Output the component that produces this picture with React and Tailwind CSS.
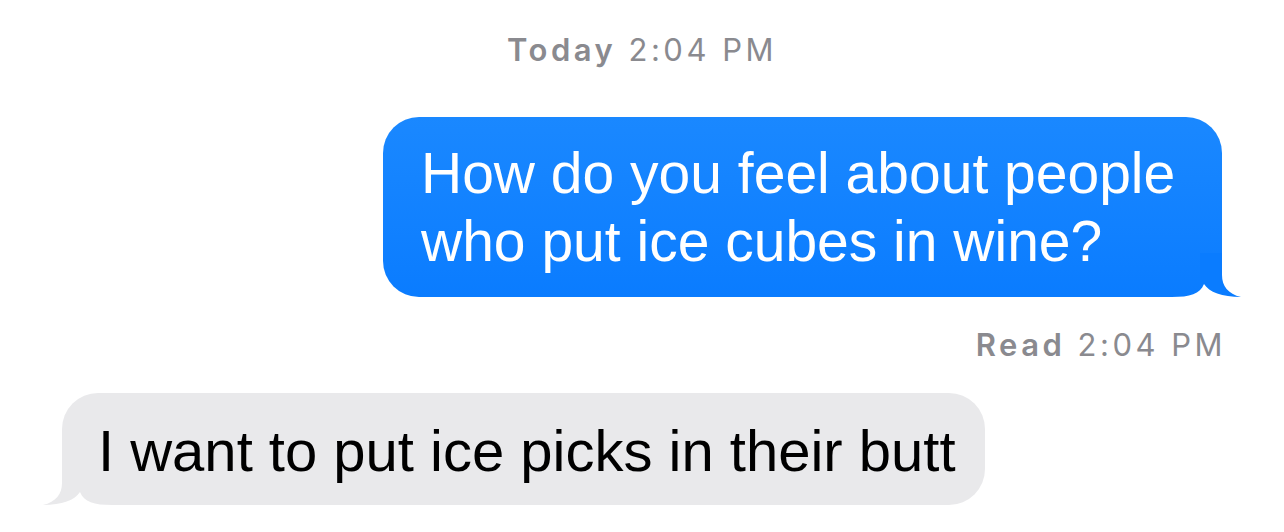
import React from "react";

const FONT = { fontFamily: '"Liberation Sans", Arial, sans-serif' };
const META = { fontFamily: 'Inter, "Liberation Sans", sans-serif' };

function Tail({ color, flip }) {
  // tail drawn from bubble's bottom-right corner; mirrored for incoming bubble
  return (
    <svg
      width="70"
      height="44"
      viewBox="0 0 70 44"
      className={
        "absolute bottom-0 " + (flip ? "left-[-20px] -scale-x-100" : "right-[-20px]")
      }
    >
      <path d="M50 0 L50 22 C50 33 56 41 69 44 L28 44 L28 0 Z" fill={color} />
      <path d="M0 44 C18 44 28 41 32 31 C37 39 50 44 69 44 Z" fill="#ffffff" />
    </svg>
  );
}

export default function App() {
  return (
    <div className="w-[1284px] h-[532px] bg-white flex flex-col overflow-hidden" style={FONT}>
      <div
        className="pt-[33px] text-center text-[31px] leading-[34px] tracking-[3.5px] text-[#8a8a8f]"
        style={META}
      >
        <span className="font-semibold">Today</span> 2:04 PM
      </div>

      <div className="flex justify-end pr-[62px] mt-[50px]">
        <div className="relative w-[839px] rounded-[36px] bg-gradient-to-b from-[#1a88ff] to-[#0a7cff] pl-[38px] py-[22px] text-white text-[57px] leading-[68px] whitespace-nowrap">
          How do you feel about people
          <br />
          who put ice cubes in wine?
          <Tail color="#0a7cff" />
        </div>
      </div>

      <div
        className="flex justify-end pr-[58px] mt-[31px] text-[31px] leading-[34px] tracking-[3.5px] text-[#8a8a8f]"
        style={META}
      >
        <span className="font-semibold">Read</span>&nbsp;2:04 PM
      </div>

      <div className="flex pl-[62px] mt-[31px]">
        <div className="relative w-[923px] rounded-[36px] bg-[#e9e9eb] pl-[36px] pt-[24px] pb-[20px] text-black text-[58px] leading-[68px] whitespace-nowrap">
          I want to put ice picks in their butt
          <Tail color="#e9e9eb" flip />
        </div>
      </div>
    </div>
  );
}
